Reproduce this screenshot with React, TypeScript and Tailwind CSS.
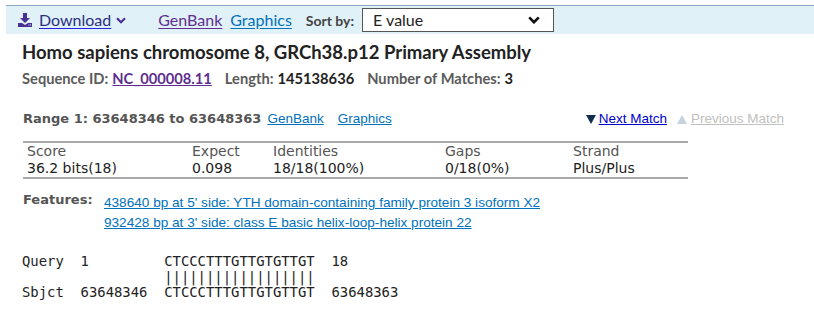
import React from "react";

const sans = "font-['Lato','Noto_Sans',sans-serif]";
const verd = "font-['DejaVu_Sans',sans-serif]";
const arial = "font-['Liberation_Sans',Arial,sans-serif]";
const mono = "font-['DejaVu_Sans_Mono',monospace]";

function DownloadIcon() {
    return (
        <svg width="14" height="14" viewBox="0 0 14 14" className="shrink-0">
            <path d="M5 0h4v5h3l-5 5-5-5h3z" fill="#4a3092" />
            <path d="M0 10h4l3 2 3-2h4v4H0z" fill="#4a3092" />
            <rect x="10.5" y="11.5" width="1" height="1" fill="#e1f1f8" />
            <rect x="12" y="11.5" width="1" height="1" fill="#e1f1f8" />
        </svg>
    );
}

function Chevron({ size = 10, color = "#4a3092" }: { size?: number; color?: string }) {
    return (
        <svg width={size} height={size * 0.7} viewBox="0 0 10 7">
            <path d="M1 1.2l4 4 4-4" stroke={color} strokeWidth="2.2" fill="none" />
        </svg>
    );
}

function Tri({ up, color }: { up?: boolean; color: string }) {
    return (
        <svg width="10" height="9" viewBox="0 0 10 9">
            <path d={up ? "M5 0l5 9H0z" : "M0 0h10L5 9z"} fill={color} />
        </svg>
    );
}

export default function App() {
    const cols = [
        ["Score", "36.2 bits(18)"],
        ["Expect", "0.098"],
        ["Identities", "18/18(100%)"],
        ["Gaps", "0/18(0%)"],
        ["Strand", "Plus/Plus"],
    ];

    return (
        <div className="w-[814px] h-[311px] bg-white overflow-hidden">
            <div className={`ml-[6px] mt-[5px] h-[29px] bg-[#e1f1f8] border-t border-[#8ea6c6] flex items-center ${sans}`}>
                <div className="flex items-center pl-[12px]">
                    <DownloadIcon />
                    <span className="ml-[7px] text-[16px] text-[#2b2f82] underline decoration-[#2323e0] underline-offset-2">Download</span>
                    <span className="ml-[5px]"><Chevron /></span>
                </div>
                <span className="ml-[32px] text-[16px] text-[#5e2f8f] underline underline-offset-2">GenBank</span>
                <span className="ml-[8px] text-[16px] text-[#0071bc] underline underline-offset-2">Graphics</span>
                <span className="ml-[14px] text-[14px] font-bold text-[#444]">Sort by:</span>
                <div className="ml-[8px] w-[192px] h-[24px] bg-white border border-[#555] flex items-center justify-between pl-[10px] pr-[13px]">
                    <span className="text-[16px] text-[#222]">E value</span>
                    <Chevron size={12} color="#111" />
                </div>
            </div>

            <div className="pl-[22px]">
                <h1 className={`${sans} mt-[5px] text-[18.5px] font-bold text-[#222] leading-[26px]`}>
                    Homo sapiens chromosome 8, GRCh38.p12 Primary Assembly
                </h1>
                <div className={`${sans} mt-[3px] text-[14.7px] font-bold leading-[20px] flex`}>
                    <span className="text-[#5b5b5b]">Sequence ID:</span>
                    <span className="ml-[4px] text-[#5e2f8f] underline">NC_000008.11</span>
                    <span className="ml-[13px] text-[#5b5b5b]">Length:</span>
                    <span className="ml-[4px] text-[#222]">145138636</span>
                    <span className="ml-[13px] text-[#5b5b5b]">Number of Matches:</span>
                    <span className="ml-[4px] text-[#222]">3</span>
                </div>
            </div>

            <div className="pl-[23px] pr-[30px] mt-[21px] flex items-center h-[20px]">
                <span className={`${verd} text-[13px] font-bold text-[#555]`}>Range 1: 63648346 to 63648363</span>
                <span className={`${arial} ml-[6px] text-[13.5px] text-[#0071bc] underline`}>GenBank</span>
                <span className={`${arial} ml-[14px] text-[13.5px] text-[#0071bc] underline`}>Graphics</span>
                <div className={`${arial} ml-auto flex items-center text-[13.5px]`}>
                    <Tri color="#112e51" />
                    <span className="ml-[3px] text-[#0000cc] underline">Next Match</span>
                    <span className="ml-[10px]"><Tri up color="#c5d3de" /></span>
                    <span className="ml-[4px] text-[#c0c0c0] underline">Previous Match</span>
                </div>
            </div>

            <div className={`${verd} ml-[23px] mt-[12px] w-[665px] border-y-2 border-[#a8a8a8] pl-[4px] grid grid-cols-[165px_81px_172px_128px_1fr] text-[14px] leading-[17px]`}>
                {cols.map(([h, v]) => (
                    <div key={h}>
                        <div className="text-[#555]">{h}</div>
                        <div className="text-[#222]">{v}</div>
                    </div>
                ))}
            </div>

            <div className="pl-[23px] mt-[11px] flex">
                <span className={`${verd} w-[81px] text-[13px] font-bold text-[#555] leading-[20px]`}>Features:</span>
                <div className={`${arial} mt-[3px] text-[13.6px] leading-[20px] text-[#0071bc] flex flex-col`}>
                    <span className="underline">438640 bp at 5' side: YTH domain-containing family protein 3 isoform X2</span>
                    <span className="underline">932428 bp at 3' side: class E basic helix-loop-helix protein 22</span>
                </div>
            </div>

            <pre className={`${mono} pl-[22px] mt-[21px] text-[13.9px] leading-[15.5px] text-[#222]`}>
{`Query  1         CTCCCTTTGTTGTGTTGT  18
                 ||||||||||||||||||
Sbjct  63648346  CTCCCTTTGTTGTGTTGT  63648363`}
            </pre>
        </div>
    );
}
